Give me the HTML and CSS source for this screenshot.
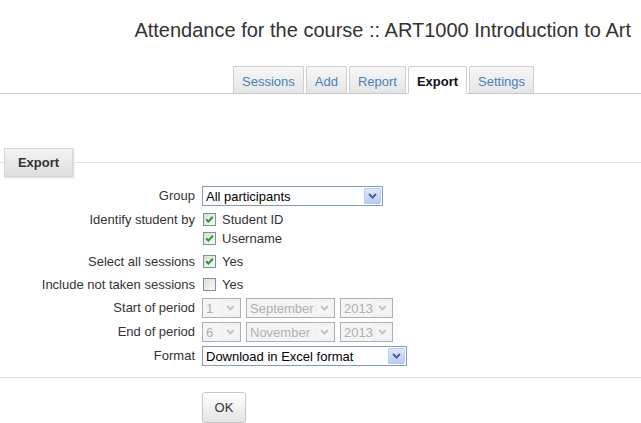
FILE: index.html
```html
<!DOCTYPE html>
<html>
<head>
<meta charset="utf-8">
<title>Attendance export</title>
<link rel="stylesheet" href="styles.css">
</head>
<body>
<div class="page">
  <h2 class="title">Attendance for the course :: ART1000 Introduction to Art</h2>
  <div class="tabbar">
    <ul class="tabs">
      <li class="tab"><a class="tab-link">Sessions</a></li>
      <li class="tab"><a class="tab-link">Add</a></li>
      <li class="tab"><a class="tab-link">Report</a></li>
      <li class="tab tab-active"><a class="tab-link">Export</a></li>
      <li class="tab"><a class="tab-link">Settings</a></li>
    </ul>
  </div>

  <form class="export-form">
    <div class="fs-head">
      <span class="legend">Export</span>
    </div>
    <div class="fields">
      <div class="label l-sel">Group</div>
      <div class="control">
        <div class="select select-group">
          <span class="select-value">All participants</span>
          <span class="select-btn"><svg width="9" height="6" viewBox="0 0 9 6"><path d="M1 1 L4.5 4.5 L8 1" fill="none" stroke="#4d6185" stroke-width="2"/></svg></span>
        </div>
      </div>

      <div class="label l-cb">Identify student by</div>
      <div class="control control-stack">
        <label class="cb-item"><span class="cb"><svg width="11" height="11" viewBox="0 0 11 11"><path d="M2.2 5.2 L4.4 7.6 L8.8 2.8" fill="none" stroke="#21a121" stroke-width="2"/></svg></span>Student ID</label>
        <label class="cb-item"><span class="cb"><svg width="11" height="11" viewBox="0 0 11 11"><path d="M2.2 5.2 L4.4 7.6 L8.8 2.8" fill="none" stroke="#21a121" stroke-width="2"/></svg></span>Username</label>
      </div>

      <div class="label l-cb">Select all sessions</div>
      <div class="control">
        <label class="cb-item"><span class="cb"><svg width="11" height="11" viewBox="0 0 11 11"><path d="M2.2 5.2 L4.4 7.6 L8.8 2.8" fill="none" stroke="#21a121" stroke-width="2"/></svg></span>Yes</label>
      </div>

      <div class="label l-cb">Include not taken sessions</div>
      <div class="control">
        <label class="cb-item"><span class="cb"></span>Yes</label>
      </div>

      <div class="label l-sel">Start of period</div>
      <div class="control control-row">
        <div class="select select-disabled sel-day"><span class="select-value">1</span><span class="select-btn"><svg width="9" height="6" viewBox="0 0 9 6"><path d="M1 1 L4.5 4.5 L8 1" fill="none" stroke="#c4c4c4" stroke-width="2"/></svg></span></div>
        <div class="select select-disabled sel-month"><span class="select-value">September</span><span class="select-btn"><svg width="9" height="6" viewBox="0 0 9 6"><path d="M1 1 L4.5 4.5 L8 1" fill="none" stroke="#c4c4c4" stroke-width="2"/></svg></span></div>
        <div class="select select-disabled sel-year"><span class="select-value">2013</span><span class="select-btn"><svg width="9" height="6" viewBox="0 0 9 6"><path d="M1 1 L4.5 4.5 L8 1" fill="none" stroke="#c4c4c4" stroke-width="2"/></svg></span></div>
      </div>

      <div class="label l-sel">End of period</div>
      <div class="control control-row">
        <div class="select select-disabled sel-day"><span class="select-value">6</span><span class="select-btn"><svg width="9" height="6" viewBox="0 0 9 6"><path d="M1 1 L4.5 4.5 L8 1" fill="none" stroke="#c4c4c4" stroke-width="2"/></svg></span></div>
        <div class="select select-disabled sel-month"><span class="select-value">November</span><span class="select-btn"><svg width="9" height="6" viewBox="0 0 9 6"><path d="M1 1 L4.5 4.5 L8 1" fill="none" stroke="#c4c4c4" stroke-width="2"/></svg></span></div>
        <div class="select select-disabled sel-year"><span class="select-value">2013</span><span class="select-btn"><svg width="9" height="6" viewBox="0 0 9 6"><path d="M1 1 L4.5 4.5 L8 1" fill="none" stroke="#c4c4c4" stroke-width="2"/></svg></span></div>
      </div>

      <div class="label l-sel">Format</div>
      <div class="control">
        <div class="select select-format">
          <span class="select-value">Download in Excel format</span>
          <span class="select-btn"><svg width="9" height="6" viewBox="0 0 9 6"><path d="M1 1 L4.5 4.5 L8 1" fill="none" stroke="#4d6185" stroke-width="2"/></svg></span>
        </div>
      </div>
    </div>
    <div class="actions">
      <button type="button" class="btn">OK</button>
    </div>
  </form>
</div>
</body>
</html>
```

FILE: styles.css
```css
html, body {
  margin: 0;
  padding: 0;
  background: #fff;
}

.page {
  font-family: "Liberation Sans", Arial, sans-serif;
  font-size: 13px;
  color: #333;
  width: 641px;
  overflow: hidden;
}

.title {
  margin: 0;
  padding: 18px 10px 0 0;
  font-size: 20px;
  line-height: 24px;
  font-weight: normal;
  color: #333;
  text-align: right;
  white-space: nowrap;
}

.tabbar {
  margin-top: 24px;
  border-bottom: 1px solid #c8c8c8;
  height: 27px;
}

.tabs {
  list-style: none;
  margin: 0;
  padding: 0 0 0 233px;
  display: flex;
  gap: 2px;
  height: 27px;
}

.tab {
  box-sizing: border-box;
  height: 28px;
  margin-bottom: -1px;
  border: 1px solid #cfcfcf;
  border-bottom-color: #c8c8c8;
  background: linear-gradient(#f7f7f7, #e5e5e5);
  border-radius: 2px 2px 0 0;
}

.tab-link {
  display: block;
  padding: 0 8px;
  line-height: 29px;
  color: #4a7fb8;
  text-decoration: none;
}

.tab-active {
  background: #fff;
  border-bottom-color: #fff;
}

.tab-active .tab-link {
  color: #111;
  font-weight: bold;
  padding: 0 8px;
}

.export-form {
  margin-top: 54px;
}

.fs-head {
  display: flex;
  align-items: center;
}

.fs-head::before {
  content: "";
  width: 4px;
  border-top: 1px solid #e3e3e3;
}

.fs-head::after {
  content: "";
  flex: 1;
  border-top: 1px solid #e3e3e3;
  margin-top: -1px;
}

.legend {
  box-sizing: border-box;
  width: 69px;
  height: 29px;
  line-height: 27px;
  text-align: center;
  font-weight: bold;
  color: #333;
  border: 1px solid #d4d4d4;
  background: linear-gradient(#f3f3f3, #dedede);
  box-shadow: 1px 1px 2px rgba(0, 0, 0, 0.15);
}

.fields {
  display: grid;
  grid-template-columns: 195px 1fr;
  column-gap: 7px;
  row-gap: 4px;
  margin-top: 9px;
  padding-bottom: 11px;
  border-bottom: 1px solid #dedede;
}

.label {
  text-align: right;
  color: #333;
  white-space: nowrap;
}

.l-sel {
  line-height: 19px;
}

.l-cb {
  line-height: 19px;
}

.control-stack {
  display: flex;
  flex-direction: column;
}

.control-row {
  display: flex;
  gap: 5px;
}

.cb-item {
  display: flex;
  align-items: center;
  height: 19px;
  gap: 6px;
  color: #333;
}

.cb {
  box-sizing: border-box;
  width: 13px;
  height: 13px;
  margin-left: 1px;
  border: 1px solid #7b8fa8;
  background: linear-gradient(135deg, #dcdcd7, #fbfbfb);
  display: flex;
  align-items: center;
  justify-content: center;
}

.select {
  box-sizing: border-box;
  display: flex;
  align-items: center;
  height: 20px;
  border: 1px solid #7f9db9;
  background: #fff;
  color: #000;
}

.select-group {
  width: 181px;
}

.select-format {
  width: 205px;
}

.select-value {
  flex: 1;
  min-width: 0;
  padding-left: 3px;
  white-space: nowrap;
}

.select-btn {
  box-sizing: border-box;
  flex: none;
  width: 17px;
  height: 16px;
  margin-right: 1px;
  border: 1px solid #b9c9ef;
  border-radius: 1px;
  background: linear-gradient(#dfe8fe, #b7cafa);
  display: flex;
  align-items: center;
  justify-content: center;
}

.select-disabled {
  border-color: #a9b2bc;
  background: #f4f4f2;
  color: #b0b0b0;
}

.select-disabled .select-btn {
  border-color: #ebebeb;
  background: #f5f5f5;
}

.sel-day {
  width: 39px;
}

.sel-month {
  width: 89px;
}

.sel-year {
  width: 53px;
}

.actions {
  padding: 14px 0 0 202px;
}

.btn {
  box-sizing: border-box;
  width: 44px;
  height: 31px;
  font-family: "Liberation Sans", Arial, sans-serif;
  font-size: 13px;
  color: #333;
  border: 1px solid #c6c6c6;
  border-radius: 3px;
  background: linear-gradient(#ffffff, #e3e3e3);
  box-shadow: 0 1px 1px rgba(0, 0, 0, 0.08);
  padding: 0;
}
```
